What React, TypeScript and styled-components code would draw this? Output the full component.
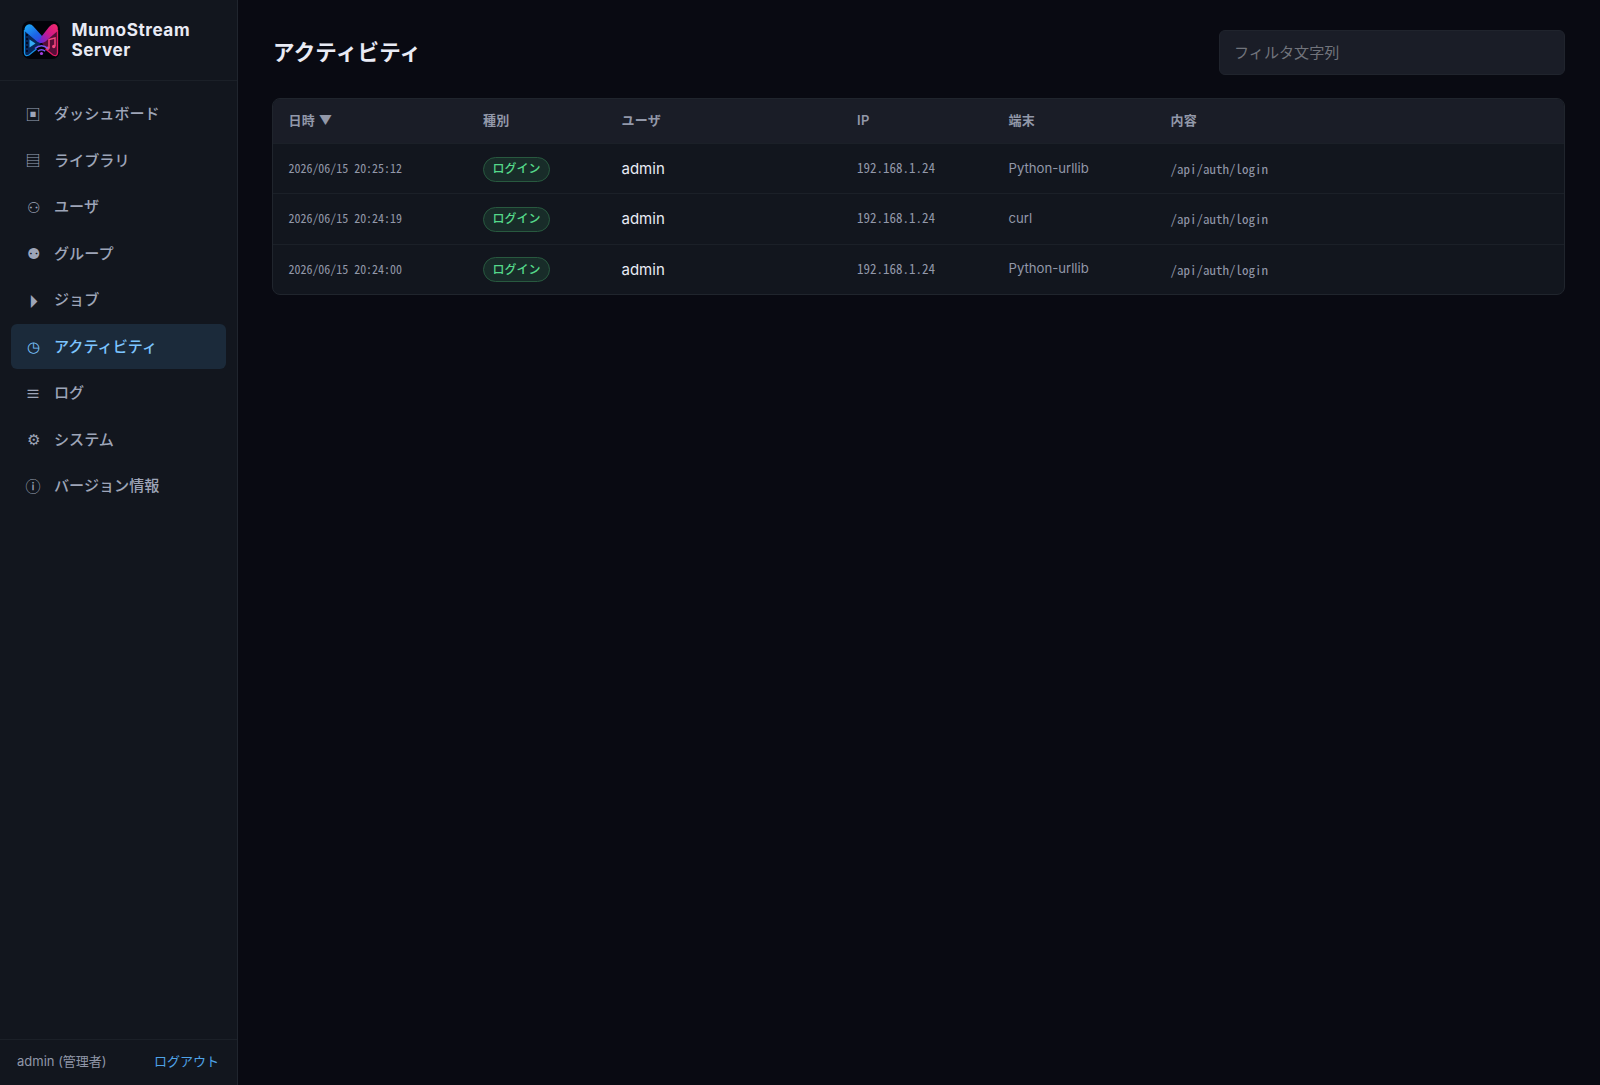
import React from "react";
import styled, { createGlobalStyle, css } from "styled-components";

const sans = `Inter, "Noto Sans CJK JP", sans-serif`;
const mono = `"Noto Sans Mono CJK JP", "Liberation Mono", monospace`;

const GlobalStyle = createGlobalStyle`
  *, *::before, *::after { box-sizing: border-box; }
  body {
    margin: 0;
    background: #090a12;
    color: #e9ebf5;
    font-family: ${sans};
    font-size: 15px;
    line-height: 1.5;
  }
`;

const Shell = styled.div`
  display: flex;
  height: 100vh;
`;

const Sidebar = styled.aside`
  display: flex;
  flex-direction: column;
  flex: 0 0 238px;
  background: #12161e;
  border-right: 1px solid #20252e;
`;

const Brand = styled.div`
  display: flex;
  align-items: center;
  gap: 11.5px;
  height: 80.5px;
  padding: 0 22px;
  border-bottom: 1px solid #1b2028;
`;

const BrandName = styled.div`
  padding-top: 1px;
  font-size: 17.2px;
  font-weight: 700;
  line-height: 20.4px;
  letter-spacing: 0.55px;
`;

const Nav = styled.nav`
  display: flex;
  flex: 1;
  flex-direction: column;
  gap: 2px;
  padding: 11px;
`;

const NavItem = styled.a<{ $active?: boolean }>`
  display: flex;
  align-items: center;
  gap: 10px;
  height: 44.5px;
  padding: 2px 11px 0;
  border-radius: 6px;
  color: #9ea5b8;
  font-size: 15.1px;
  font-weight: 500;
  ${(p) =>
    p.$active &&
    css`
      background: #1b2a3a;
      color: #7cc4ff;
    `}
`;

const NavIcon = styled.span<{ $large?: boolean }>`
  display: flex;
  justify-content: center;
  width: 22px;
  font-size: ${(p) => (p.$large ? 18 : 15)}px;
  line-height: 22px;
`;

const SidebarFooter = styled.div`
  display: flex;
  align-items: center;
  justify-content: space-between;
  height: 46px;
  padding: 0 18px 1px 17px;
  border-top: 1px solid #1b2028;
  color: #9096a8;
  font-size: 13px;
`;

const Logout = styled.a`
  color: #4fa3e8;
`;

const Main = styled.main`
  flex: 1;
  padding: 30px 35px 30px 34px;
`;

const PageHeader = styled.header`
  display: flex;
  align-items: center;
  justify-content: space-between;
  height: 45px;
  margin-bottom: 23px;
`;

const Title = styled.h1`
  margin: 0;
  padding-left: 1px;
  font-size: 21.5px;
  font-weight: 700;
  letter-spacing: 0.2px;
`;

const Filter = styled.input`
  width: 346px;
  height: 45px;
  padding: 0 14px;
  border: 1px solid #20242d;
  border-radius: 6px;
  background: #1a1d27;
  color: inherit;
  font: inherit;
  font-size: 15.1px;
  &::placeholder { color: #71747c; }
`;

const Table = styled.div`
  overflow: hidden;
  border: 1px solid #20252d;
  border-radius: 8px;
  background: #12161e;
`;

const Row = styled.div<{ $head?: boolean }>`
  display: grid;
  grid-template-columns: 194.5px 138.5px 235.5px 151.5px 162px 1fr;
  align-items: center;
  height: 50.33px;
  padding-left: 15.5px;
  & + & { border-top: 1px solid #1b2028; }
  ${(p) =>
    p.$head &&
    css`
      height: 44px;
      background: #1a1d27;
      color: #9298a9;
      font-size: 13px;
      font-weight: 600;
      letter-spacing: 0.3px;
    `}
`;

const User = styled.span`
  padding-top: 1px;
`;

const Muted = styled.span<{ $mono?: boolean; $size?: number; $raise?: number }>`
  padding-bottom: ${(p) => p.$raise ?? 0}px;
  color: #9298a9;
  font-family: ${(p) => (p.$mono ? mono : sans)};
  font-size: ${(p) => p.$size ?? 13}px;
`;

const Badge = styled.span`
  display: inline-flex;
  align-items: center;
  justify-self: start;
  height: 25px;
  margin-top: 1px;
  padding: 0 8.5px;
  border: 1px solid #28593f;
  border-radius: 13px;
  background: #182c29;
  color: #55d98a;
  font-size: 12px;
  font-weight: 500;
`;

const Logo = () => (
  <svg width="38" height="38" viewBox="0 0 38 38">
    <defs>
      <linearGradient id="blue" x1="0" y1="0" x2="0.8" y2="1">
        <stop offset="0" stopColor="#1fb0f8" />
        <stop offset="0.6" stopColor="#1b66e6" />
        <stop offset="1" stopColor="#3a3fe0" />
      </linearGradient>
      <linearGradient id="pink" x1="1" y1="0" x2="0" y2="0.8">
        <stop offset="0" stopColor="#f52c68" />
        <stop offset="0.5" stopColor="#d0188a" />
        <stop offset="1" stopColor="#5a2be0" />
      </linearGradient>
    </defs>
    <rect width="38" height="38" rx="8" fill="#020309" />
    <path d="M2.500 9v23q.5 4 4.500 2l7.500-6 5-7L6 6Z" fill="#07265a" />
    <path d="M35.500 9v23q-.5 4-4.500 2l-7.500-6-4-7L32 6Z" fill="#560e38" />
    <path d="M2.500 9v23q.5 4 4.500 2l7.500-6" fill="none" stroke="#1690e4" strokeWidth="1.300" />
    <path d="M35.500 9v23q-.5 4-4.500 2l-7.500-6" fill="none" stroke="#e01c64" strokeWidth="1.300" />
    <path d="M2.500 10Q2 5 6 3.500 9 2.500 11.500 5.500L20 15l3 4-4.500 3-4-2Z" fill="url(#blue)" />
    <path d="M14.500 20q3 .5 5-4.500L27 6q4-4.500 7.500-2 2 2 1 6L23.500 20.500q-4.500 3-9-.5Z" fill="url(#pink)" />
    <path d="M5 13v18" stroke="#020a20" strokeWidth="2" strokeDasharray="2 2" />
    <path d="M7.500 18.500v8l6-4Z" fill="#35acf5" />
    <path d="M27 27v-8.500l6-1.500v8" fill="none" stroke="#f5467e" strokeWidth="1.500" />
    <circle cx="25.800" cy="27.200" r="1.700" fill="#f5467e" />
    <circle cx="31.800" cy="25.500" r="1.700" fill="#f5467e" />
    <path d="M13 27.500q6.500-5.500 13 0M15.800 30.200q3.700-3 7.400 0" fill="none" stroke="#7757f3" strokeWidth="1.500" />
    <circle cx="19.500" cy="32.500" r="1.600" fill="#a53fe0" />
  </svg>
);

const navItems = [
  { icon: "▣", label: "ダッシュボード" },
  { icon: "▤", label: "ライブラリ" },
  { icon: "⚇", label: "ユーザ" },
  { icon: "⚉", label: "グループ" },
  { icon: "⏵", label: "ジョブ", large: true },
  { icon: "◷", label: "アクティビティ", active: true },
  { icon: "≡", label: "ログ" },
  { icon: "⚙", label: "システム" },
  { icon: "ⓘ", label: "バージョン情報" },
];

const columns = ["日時 ▼", "種別", "ユーザ", "IP", "端末", "内容"];

const events = [
  { time: "2026/06/15 20:25:12", agent: "Python-urllib" },
  { time: "2026/06/15 20:24:19", agent: "curl" },
  { time: "2026/06/15 20:24:00", agent: "Python-urllib" },
];

export default function App() {
  return (
    <Shell>
      <GlobalStyle />
      <Sidebar>
        <Brand>
          <Logo />
          <BrandName>
            MumoStream
            <br />
            Server
          </BrandName>
        </Brand>
        <Nav>
          {navItems.map((item) => (
            <NavItem key={item.label} $active={item.active}>
              <NavIcon $large={item.large}>{item.icon}</NavIcon>
              {item.label}
            </NavItem>
          ))}
        </Nav>
        <SidebarFooter>
          <span>admin (管理者)</span>
          <Logout>ログアウト</Logout>
        </SidebarFooter>
      </Sidebar>
      <Main>
        <PageHeader>
          <Title>アクティビティ</Title>
          <Filter placeholder="フィルタ文字列" />
        </PageHeader>
        <Table>
          <Row $head>
            {columns.map((name) => (
              <span key={name}>{name}</span>
            ))}
          </Row>
          {events.map((event) => (
            <Row key={event.time}>
              <Muted $mono $size={11.95} $raise={1.5}>{event.time}</Muted>
              <Badge>ログイン</Badge>
              <User>admin</User>
              <Muted $mono $raise={1.5}>192.168.1.24</Muted>
              <Muted $size={13.15}>{event.agent}</Muted>
              <Muted $mono>/api/auth/login</Muted>
            </Row>
          ))}
        </Table>
      </Main>
    </Shell>
  );
}
